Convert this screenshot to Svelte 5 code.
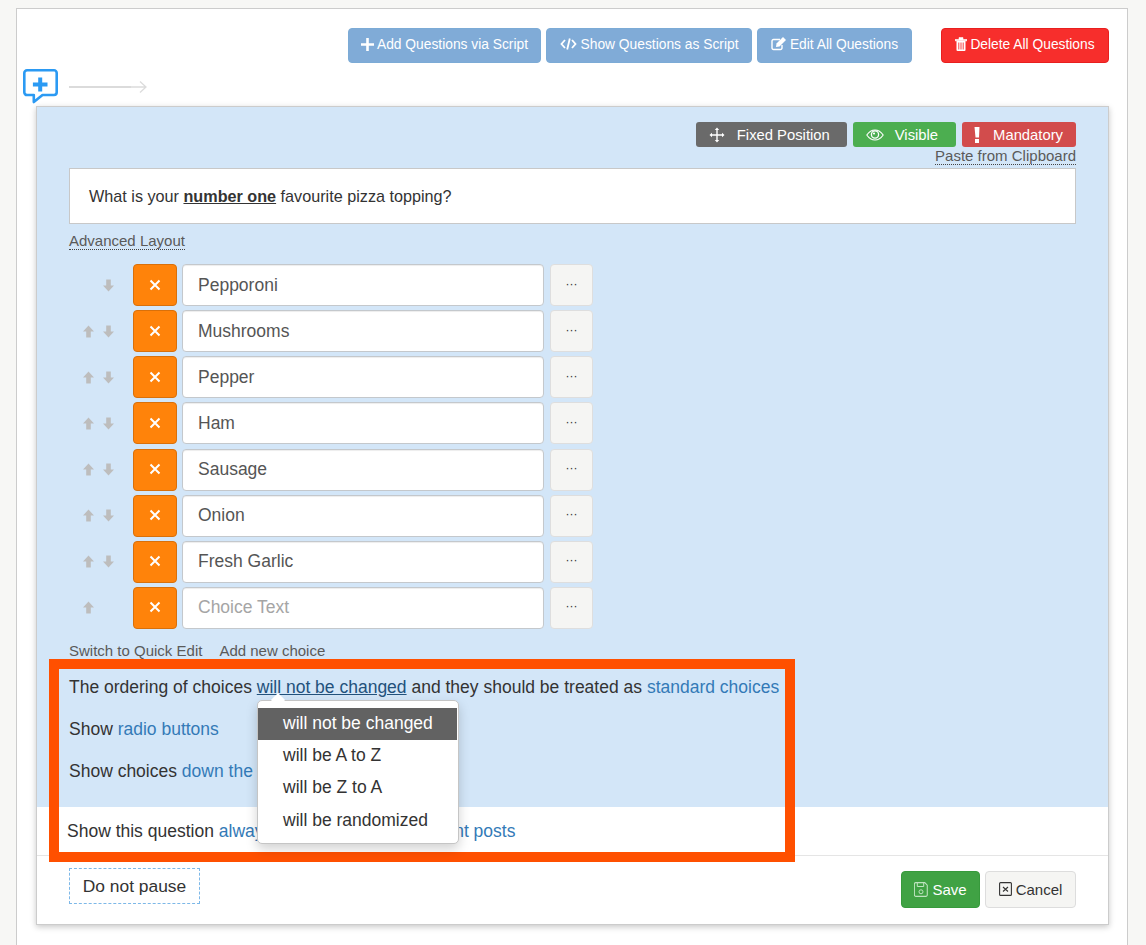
<script>
  const choices = [
    { text: 'Pepporoni', up: false, down: true },
    { text: 'Mushrooms', up: true, down: true },
    { text: 'Pepper', up: true, down: true },
    { text: 'Ham', up: true, down: true },
    { text: 'Sausage', up: true, down: true },
    { text: 'Onion', up: true, down: true },
    { text: 'Fresh Garlic', up: true, down: true },
    { text: '', up: true, down: false }
  ];
  const menu = ['will not be changed', 'will be A to Z', 'will be Z to A', 'will be randomized'];
</script>

<div class="page">
  <div class="panel">
    <div class="toolbar">
      <button class="tb blue w-add">
        <svg width="13" height="13" viewBox="0 0 13 13"><path d="M5.200 0h2.600v5.200H13v2.600H7.800V13H5.200V7.800H0V5.200h5.200z" fill="#fff"/></svg>
        Add Questions via Script
      </button>
      <button class="tb blue w-show">
        <svg width="17" height="12" viewBox="0 0 17 12"><path d="M5 2L1.500 6 5 10M12 2l3.500 4L12 10M9.800 .5L7.200 11.500" fill="none" stroke="#fff" stroke-width="1.800"/></svg>
        Show Questions as Script
      </button>
      <button class="tb blue w-edit">
        <svg width="16" height="14" viewBox="0 0 16 14"><path d="M11 8v3a1.500 1.500 0 0 1-1.500 1.500H2.500A1.500 1.500 0 0 1 1 11V4a1.500 1.500 0 0 1 1.500-1.500H9" fill="none" stroke="#fff" stroke-width="1.400"/><path d="M5.500 6.500L12 0l3 3-6.500 6.500-3.500.5z" fill="#fff"/></svg>
        Edit All Questions
      </button>
      <button class="tb red w-del">
        <svg width="12" height="14" viewBox="0 0 12 14"><path d="M0 2.500h12v1.300H0zM4 2.500V.6h4v1.900" fill="#fff" stroke="#fff" stroke-width=".6"/><path d="M1.500 4h9v9a1 1 0 0 1-1 1h-7a1 1 0 0 1-1-1z" fill="#fff"/><path d="M3.800 5.500v7M6 5.500v7M8.200 5.500v7" stroke="#f62d2d" stroke-width=".9"/></svg>
        Delete All Questions
      </button>
    </div>

    <div class="adder">
      <svg width="36" height="36" viewBox="0 0 36 36">
        <path d="M4 1.300h27a2.700 2.700 0 0 1 2.700 2.700v19.300a2.700 2.700 0 0 1-2.700 2.700H19.500L10.800 33V26H4a2.700 2.700 0 0 1-2.700-2.700V4A2.700 2.700 0 0 1 4 1.300z" fill="#fff" stroke="#2b9af3" stroke-width="2.600" stroke-linejoin="round"/>
        <path d="M15.200 8.500h4v5h5.300v4h-5.300v5h-4v-5h-5.300v-4h5.300z" fill="#2b9af3"/>
      </svg>
      <svg class="arrow" width="80" height="14" viewBox="0 0 80 14"><path d="M0 7h62" stroke="#cfcfcf" stroke-width="1.600"/><path d="M62 7h15M71 1.500L77 7l-6 5.500" fill="none" stroke="#dcdcdc" stroke-width="1.300"/></svg>
    </div>

    <div class="card">
      <div class="blue-area">
        <div class="badges">
          <span class="badge grey">
            <svg width="16" height="16" viewBox="0 0 16 16"><path d="M8 .5l2.200 2.500H8.700v4.300H13V5.800L15.500 8 13 10.200V8.700H8.700V13h1.500L8 15.500 5.800 13h1.500V8.700H3v1.500L.5 8 3 5.800v1.500h4.300V3H5.800z" fill="#fff"/></svg>
            <span>Fixed Position</span>
          </span>
          <span class="badge green">
            <svg width="18" height="12" viewBox="0 0 18 12"><path d="M.8 6C3 2.800 5.800 1 9 1s6 1.800 8.200 5C15 9.200 12.200 11 9 11S3 9.200.8 6z" fill="none" stroke="#fff" stroke-width="1.100"/><circle cx="9" cy="5.500" r="3.600" fill="none" stroke="#fff" stroke-width="1.300"/><circle cx="8" cy="4.500" r="1.100" fill="#fff"/></svg>
            <span>Visible</span>
          </span>
          <span class="badge redb">
            <svg width="8" height="16" viewBox="0 0 8 16"><path d="M1.500 0h5L6 10.500H2.500z M2 12h4v4H2z" fill="#fff"/></svg>
            <span>Mandatory</span>
          </span>
        </div>
        <div class="paste"><span class="dotted">Paste from Clipboard</span></div>
        <div class="question"><span>What is your <strong>number one</strong> favourite pizza topping?</span></div>
        <div class="adv"><span class="dotted">Advanced Layout</span></div>

        <div class="rows">
          {#each choices as c}
            <div class="row">
              <div class="arrows">
                <svg class:off={!c.up} width="11" height="13" viewBox="0 0 12 13"><path d="M6 0l6 6.500H8.500V13h-5V6.500H0z" fill="#bdbdbd"/></svg>
                <svg class:off={!c.down} width="11" height="13" viewBox="0 0 12 13"><path d="M6 13L0 6.500h3.500V0h5v6.500H12z" fill="#bdbdbd"/></svg>
              </div>
              <div class="del">
                <svg width="12" height="12" viewBox="0 0 12 12"><path d="M1.500 1.500l9 9M10.500 1.500l-9 9" stroke="#fff" stroke-width="2"/></svg>
              </div>
              <input class="choice" value={c.text} placeholder="Choice Text" />
              <div class="more">···</div>
            </div>
          {/each}
        </div>

        <div class="links"><span>Switch to Quick Edit</span><span>Add new choice</span></div>

        <p class="line">The ordering of choices <a class="open" href="#o">will not be changed</a> and they should be treated as <a href="#s">standard choices</a></p>
        <p class="line">Show <a href="#r">radio buttons</a></p>
        <p class="line">Show choices <a href="#d">down the page</a></p>
      </div>

      <div class="white-band">Show this question <a href="#a">always and only in some current posts</a></div>

      <div class="footer">
        <div class="pause">Do not pause</div>
        <div class="actions">
          <button class="act save">
            <svg width="14" height="15" viewBox="0 0 14 15"><path d="M1.500.6h9.300l2.600 2.600v9.700a1.500 1.500 0 0 1-1.500 1.500h-10.400A1.500 1.500 0 0 1 0 12.900V2.100A1.500 1.500 0 0 1 1.500.6z" transform="translate(.4 0) scale(.96 1)" fill="none" stroke="#bfe3c0" stroke-width="1.100"/><path d="M3.300 .8v3.700h6.400V.8" fill="none" stroke="#bfe3c0"/><circle cx="7" cy="9.800" r="2" fill="none" stroke="#bfe3c0"/></svg>
            Save
          </button>
          <button class="act cancel">
            <svg width="13" height="14" viewBox="0 0 13 14"><rect x=".6" y=".6" width="11.800" height="12.800" rx="1" fill="none" stroke="#333" stroke-width="1.100"/><path d="M4 5l5 4.500M9 5L4 9.500" stroke="#333" stroke-width="1.100"/></svg>
            Cancel
          </button>
        </div>
      </div>
    </div>

    <div class="frame"></div>

    <div class="menu">
      <span class="caret"></span>
      {#each menu as m, i}
        <div class="item" class:active={i === 0}>{m}</div>
      {/each}
    </div>
  </div>
</div>

<style>
  :global(body) {
    margin: 0;
    background: #f7f7f5;
    font-family: "Liberation Sans", Arial, sans-serif;
    color: #333;
    overflow: hidden;
  }
  .page {
    padding: 8px 18px 0 16px;
  }
  .panel {
    position: relative;
    box-sizing: border-box;
    height: 937px;
    background: #fff;
    border: 1px solid #ccc;
    border-bottom: none;
  }
  .toolbar {
    display: flex;
    justify-content: flex-end;
    gap: 5px;
    padding: 19px 18px 0 0;
  }
  button {
    font-family: inherit;
  }
  .tb {
    box-sizing: border-box;
    height: 35px;
    padding: 0 0 3px;
    display: inline-flex;
    align-items: center;
    justify-content: center;
    gap: 3px;
    font-size: 13.8px;
    color: #fff;
    border-radius: 4px;
    border: 1px solid #7cabd6;
    white-space: nowrap;
  }
  .tb svg {
    flex: none;
  }
  .w-add { width: 193px; }
  .w-show { width: 206px; gap: 4px; }
  .w-edit { width: 155px; }
  .w-del { width: 168px; }
  .blue {
    background: #80abd7;
  }
  .red {
    background: #f72e2c;
    border-color: #e81f1f;
    margin-left: 24px;
  }
  .adder {
    display: flex;
    align-items: flex-start;
    gap: 10px;
    height: 37px;
    margin: 6px 0 0 6px;
  }
  .arrow {
    margin-top: 11px;
  }
  .card {
    margin: 0 18px 0 19px;
    border: 1px solid #ccc;
    box-shadow: 0 2px 6px rgba(0, 0, 0, 0.22);
    background: #fff;
    position: relative;
  }
  .blue-area {
    background: #d3e6f8;
    padding: 15px 32px 25px;
  }
  .badges {
    display: flex;
    justify-content: flex-end;
    gap: 6px;
  }
  .badge {
    box-sizing: border-box;
    height: 25px;
    border-radius: 3px;
    color: #fff;
    font-size: 14.8px;
    display: inline-flex;
    align-items: center;
    gap: 12px;
    padding: 0 17px 0 13px;
  }
  .grey { background: #6a6a6a; }
  .green { background: #4cae50; gap: 11px; padding-right: 18px; }
  .redb { background: #d24c4c; padding: 0 13px 0 11px; }
  .dotted {
    display: inline-block;
    font-size: 15px;
    line-height: 16px;
    color: #5a5a5a;
    border-bottom: 1px dotted #444;
  }
  .paste {
    text-align: right;
    height: 21px;
  }
  .question {
    box-sizing: border-box;
    height: 56px;
    background: #fff;
    border: 1px solid #c8c8c8;
    padding: 0 19px;
    display: flex;
    align-items: center;
    font-size: 16.2px;
    line-height: 22px;
  }
  .question strong {
    text-decoration: underline;
  }
  .adv {
    margin-top: 8px;
    height: 18px;
  }
  .rows {
    display: flex;
    flex-direction: column;
    gap: 4.14px;
    margin-top: 14px;
  }
  .row {
    display: flex;
    align-items: stretch;
    height: 42px;
  }
  .arrows {
    width: 64px;
    display: flex;
    align-items: center;
    gap: 9px;
    padding-left: 14px;
    box-sizing: border-box;
  }
  .off {
    visibility: hidden;
  }
  .del {
    box-sizing: border-box;
    width: 44px;
    background: #ff830a;
    border: 1px solid #d9700a;
    border-radius: 4px;
    display: flex;
    align-items: center;
    justify-content: center;
    padding-bottom: 1px;
  }
  .choice {
    box-sizing: border-box;
    width: 362px;
    margin-left: 5px;
    border: 1px solid #c4c8cc;
    border-radius: 4px;
    background: #fff;
    padding: 0 15px;
    font: 17.5px "Liberation Sans", Arial, sans-serif;
    color: #555;
    box-shadow: inset 0 1px 1px rgba(0, 0, 0, 0.075);
    outline: none;
  }
  .choice::placeholder {
    color: #a5a5a5;
    opacity: 1;
  }
  .more {
    box-sizing: border-box;
    width: 43px;
    margin-left: 6px;
    padding-bottom: 3px;
    background: #f5f5f3;
    border: 1px solid #dedede;
    border-radius: 4px;
    display: flex;
    align-items: center;
    justify-content: center;
    font-size: 12px;
    color: #333;
  }
  .links {
    display: flex;
    gap: 17px;
    margin-top: 14px;
    font-size: 15px;
    line-height: 16px;
    color: #5a5a5a;
  }
  .line {
    margin: 17px 0 20px;
    font-size: 17.5px;
    line-height: 22px;
    white-space: nowrap;
  }
  .line + .line {
    margin-top: 0;
  }
  .line:last-child {
    margin-bottom: 0;
  }
  a {
    color: #337ab7;
    text-decoration: none;
  }
  a.open {
    color: #23527c;
    text-decoration: underline;
  }
  .white-band {
    box-sizing: border-box;
    height: 49px;
    padding: 13px 0 0 30px;
    font-size: 17.5px;
    line-height: 22px;
    border-bottom: 1px solid #e5e5e5;
    white-space: nowrap;
  }
  .footer {
    display: flex;
    justify-content: space-between;
    align-items: flex-start;
    height: 68px;
    padding: 12px 32px 0;
    box-sizing: border-box;
  }
  .pause {
    box-sizing: border-box;
    height: 36px;
    width: 131px;
    padding-top: 1px;
    border: 1px dashed #7db8e8;
    font-size: 17.4px;
    display: flex;
    align-items: center;
    justify-content: center;
  }
  .actions {
    display: flex;
    gap: 5px;
    margin-top: 3px;
  }
  .act {
    box-sizing: border-box;
    height: 37px;
    display: inline-flex;
    align-items: center;
    justify-content: center;
    gap: 4px;
    font-size: 15px;
    border-radius: 4px;
  }
  .save {
    width: 79px;
    background: #40a244;
    border: 1px solid #379a3c;
    color: #fff;
  }
  .cancel {
    width: 91px;
    background: #f5f5f3;
    border: 1px solid #ddd;
    color: #333;
  }
  .frame {
    position: absolute;
    left: 32px;
    top: 650px;
    width: 726px;
    height: 183px;
    border: 10px solid #ff5000;
    pointer-events: none;
  }
  .menu {
    position: absolute;
    left: 240px;
    top: 691px;
    box-sizing: border-box;
    width: 202px;
    height: 144px;
    padding: 7px 1px 0 0;
    background: #fff;
    border: 1px solid #c5c5c5;
    border-radius: 5px;
    box-shadow: 0 5px 12px rgba(0, 0, 0, 0.18);
    font-size: 17.5px;
  }
  .caret {
    position: absolute;
    left: 15px;
    top: -6px;
    width: 10px;
    height: 10px;
    background: #fff;
    transform: rotate(45deg);
  }
  .item {
    position: relative;
    height: 32px;
    line-height: 31px;
    padding-left: 25px;
    color: #333;
  }
  .item:last-child {
    line-height: 33px;
  }
  .item.active {
    background: #626262;
    color: #fff;
  }
</style>
